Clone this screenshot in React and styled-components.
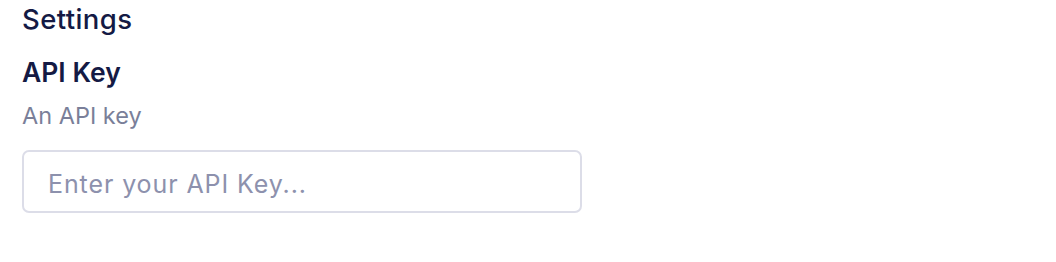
import React from "react";
import styled, { createGlobalStyle } from "styled-components";

const Global = createGlobalStyle`
  html, body { margin: 0; padding: 0; background: #ffffff; }
  body { font-family: Inter, "Noto Sans", sans-serif; }
`;

const Page = styled.div`
  padding: 2.5px 22px 0 22px;
  display: flex;
  flex-direction: column;
`;

const Title = styled.h1`
  margin: 0;
  font-size: 27.5px;
  line-height: 33px;
  font-weight: 500;
  letter-spacing: 0.4px;
  color: #141a44;
`;

const Field = styled.div`
  display: flex;
  flex-direction: column;
  margin-top: 20.5px;
`;

const Label = styled.label`
  font-size: 26.5px;
  line-height: 32px;
  font-weight: 600;
  color: #141a44;
`;

const Hint = styled.p`
  margin: 13.5px 0 0 0;
  font-size: 23.5px;
  line-height: 28px;
  font-weight: 400;
  color: #7a7f99;
`;

const Input = styled.input`
  box-sizing: border-box;
  margin-top: 20.5px;
  width: 560px;
  height: 63px;
  padding: 5px 24px 0 24px;
  border: 2px solid #dcdde8;
  border-radius: 7px;
  font-family: Inter, "Noto Sans", sans-serif;
  font-size: 25px;
  letter-spacing: 0.9px;
  color: #141a44;
  outline: none;
  background: #fff;
  &::placeholder {
    color: #8d91ad;
  }
`;

export default function App() {
  return (
    <>
      <Global />
      <Page>
        <Title>Settings</Title>
        <Field>
          <Label htmlFor="api">API Key</Label>
          <Hint>An API key</Hint>
          <Input id="api" placeholder="Enter your API Key..." />
        </Field>
      </Page>
    </>
  );
}
